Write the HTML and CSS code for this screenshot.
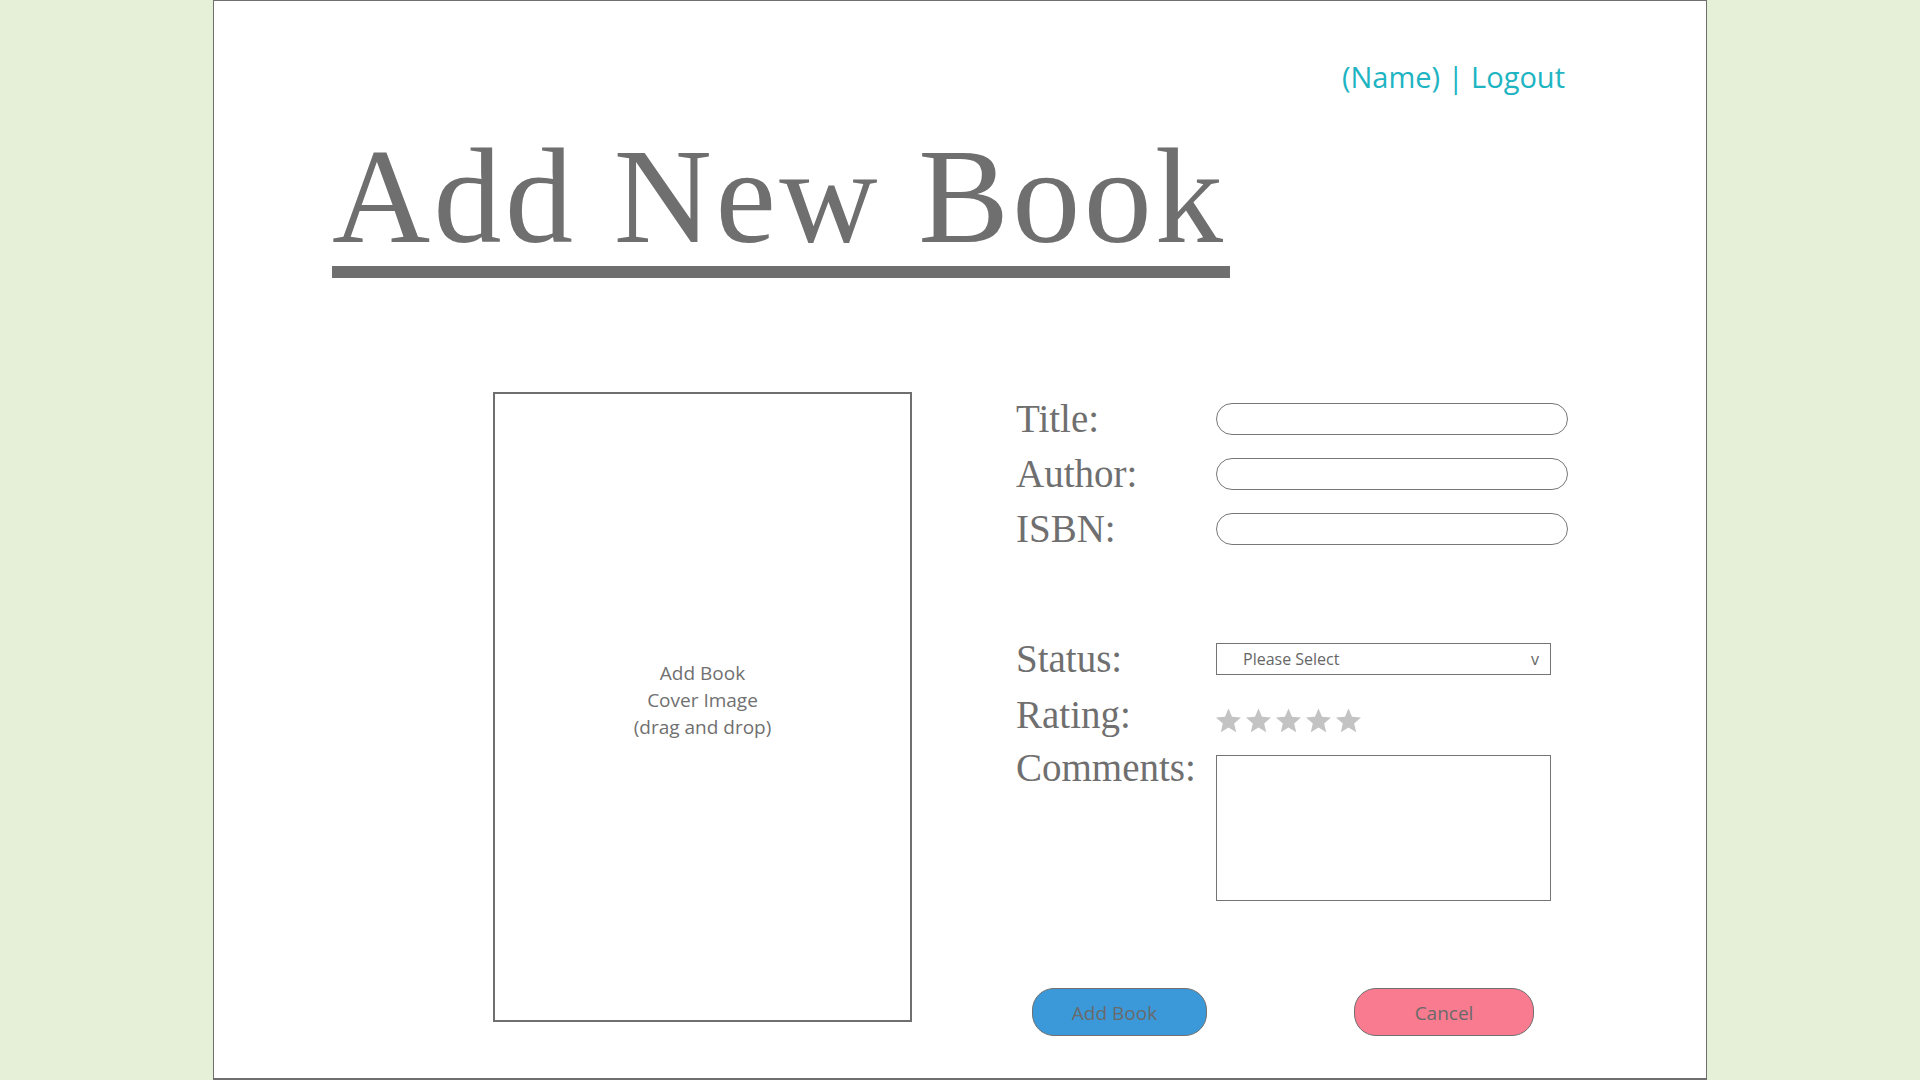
FILE: index.html
```html
<!DOCTYPE html>
<html lang="en">
<head>
<meta charset="utf-8">
<title>Add New Book</title>
<link rel="stylesheet" href="styles.css">
</head>
<body>
<div class="panel">
  <div class="topbar"><a class="user" href="#">(Name) | Logout</a></div>
  <div class="heading"><h1 class="title">Add New Book</h1></div>
  <div class="main">
    <div class="cover"><p class="cover-text">Add Book<br>Cover Image<br>(drag and drop)</p></div>
    <form class="form">
      <div class="row r1"><label class="label">Title:</label><input class="field" type="text"></div>
      <div class="row r2"><label class="label">Author:</label><input class="field" type="text"></div>
      <div class="row r2"><label class="label">ISBN:</label><input class="field" type="text"></div>
      <div class="row r-status"><label class="label">Status:</label><div class="select"><span>Please Select</span><span class="caret">v</span></div></div>
      <div class="row r-rating"><label class="label">Rating:</label>
        <div class="stars">
          <svg class="star" viewBox="2 2 20 19.3"><path d="M12 17.27L18.18 21l-1.64-7.03L22 9.24l-7.19-.61L12 2 9.19 8.63 2 9.24l5.46 4.73L5.82 21z"/></svg>
          <svg class="star" viewBox="2 2 20 19.3"><path d="M12 17.27L18.18 21l-1.64-7.03L22 9.24l-7.19-.61L12 2 9.19 8.63 2 9.24l5.46 4.73L5.82 21z"/></svg>
          <svg class="star" viewBox="2 2 20 19.3"><path d="M12 17.27L18.18 21l-1.64-7.03L22 9.24l-7.19-.61L12 2 9.19 8.63 2 9.24l5.46 4.73L5.82 21z"/></svg>
          <svg class="star" viewBox="2 2 20 19.3"><path d="M12 17.27L18.18 21l-1.64-7.03L22 9.24l-7.19-.61L12 2 9.19 8.63 2 9.24l5.46 4.73L5.82 21z"/></svg>
          <svg class="star" viewBox="2 2 20 19.3"><path d="M12 17.27L18.18 21l-1.64-7.03L22 9.24l-7.19-.61L12 2 9.19 8.63 2 9.24l5.46 4.73L5.82 21z"/></svg>
        </div>
      </div>
      <div class="row r-comments"><label class="label label-top">Comments:</label><textarea class="comments"></textarea></div>
      <div class="buttons"><button type="button" class="btn btn-add">Add Book</button><button type="button" class="btn btn-cancel">Cancel</button></div>
    </form>
  </div>
</div>
</body>
</html>
```
FILE: styles.css
```css
* { box-sizing: border-box; }
html, body { margin: 0; padding: 0; }
body {
  background: #e6efd8;
  font-family: "Open Sans", "Liberation Sans", sans-serif;
  color: #707070;
}
.panel {
  width: 1494px;
  height: 1080px;
  margin: 0 auto;
  background: #fff;
  border: 1px solid #6f6f6f;
  border-bottom-width: 2px;
  overflow: hidden;
}
.topbar {
  display: flex;
  justify-content: flex-end;
  padding: 57px 141px 0 0;
}
.user {
  font-size: 29px;
  line-height: 38px;
  color: #20b4c2;
  text-decoration: none;
}
.heading {
  padding-left: 118px;
  margin-top: 32px;
}
.title {
  display: inline-block;
  margin: 0;
  font-family: "Liberation Serif", "Times New Roman", serif;
  font-weight: normal;
  font-size: 136px;
  line-height: 136px;
  letter-spacing: 3.4px;
  color: #6f6f6f;
  padding: 0 3px 2px 0;
  border-bottom: 12px solid #6f6f6f;
}
.main {
  display: flex;
  align-items: flex-start;
  padding-left: 279px;
  margin-top: 114px;
}
.cover {
  width: 419px;
  height: 630px;
  border: 2px solid #6f6f6f;
  display: flex;
  align-items: center;
  justify-content: center;
}
.cover-text {
  margin: 0 0 14px;
  text-align: center;
  font-size: 19px;
  line-height: 27px;
  color: #707070;
}
.form {
  margin-left: 104px;
  padding-top: 11px;
}
.row {
  display: flex;
  align-items: center;
}
.r2 { margin-top: 23px; }
.r-status { margin-top: 98px; }
.r-rating { margin-top: 22px; height: 36px; }
.r-comments { margin-top: 22px; align-items: flex-start; }
.label {
  width: 200px;
  font-family: "Liberation Serif", "Times New Roman", serif;
  font-size: 39px;
  line-height: 32px;
  color: #6f6f6f;
}
.label-top { margin-top: -3px; }
.field {
  width: 352px;
  height: 32px;
  border: 1px solid #777;
  border-radius: 16px;
  background: #fff;
  padding: 0 14px;
  font: inherit;
}
.select {
  width: 335px;
  height: 32px;
  border: 1.5px solid #747474;
  display: flex;
  align-items: center;
  justify-content: space-between;
  padding: 0 11px 0 26px;
  font-size: 16px;
  color: #666;
}
.caret { font-size: 16px; }
.stars {
  display: flex;
  gap: 5px;
  margin-top: 10px;
}
.star {
  width: 25px;
  height: 25px;
  fill: #c3c3c3;
}
.comments {
  width: 335px;
  height: 146px;
  border: 1.5px solid #747474;
  resize: none;
  margin: 0;
  font: inherit;
}
.buttons {
  display: flex;
  margin-top: 87px;
  padding-left: 16px;
}
.btn {
  height: 48px;
  border: 1px solid #707070;
  border-radius: 22px;
  font-family: "Open Sans", "Liberation Sans", sans-serif;
  font-size: 19px;
  color: #6a6a6a;
  padding: 2px 0 0;
}
.btn-add {
  width: 175px;
  background: #3b99d9;
  padding-right: 10px;
}
.btn-cancel {
  width: 180px;
  margin-left: 147px;
  background: #f87b8f;
}
```
